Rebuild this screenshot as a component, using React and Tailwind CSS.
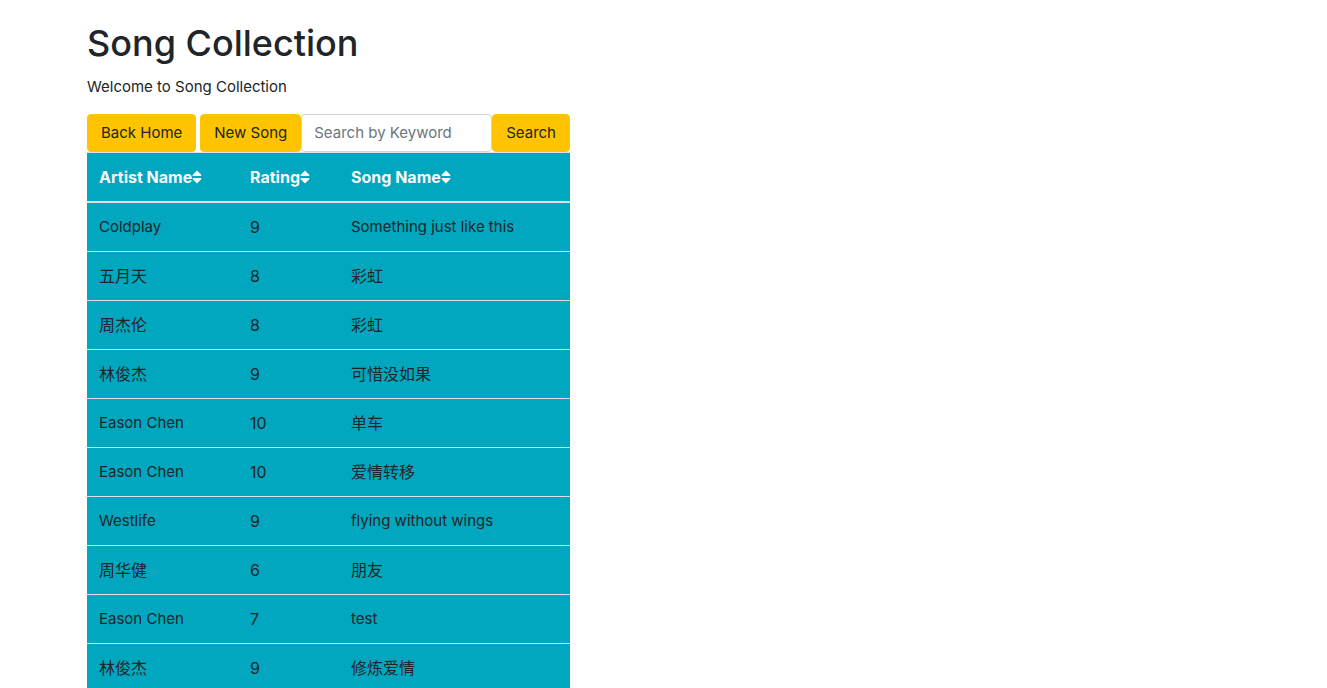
import { useState } from "react";
import { FaSort } from "react-icons/fa";

const songs = [
  ["Coldplay", 9, "Something just like this"],
  ["五月天", 8, "彩虹"],
  ["周杰伦", 8, "彩虹"],
  ["林俊杰", 9, "可惜没如果"],
  ["Eason Chen", 10, "单车"],
  ["Eason Chen", 10, "爱情转移"],
  ["Westlife", 9, "flying without wings"],
  ["周华健", 6, "朋友"],
  ["Eason Chen", 7, "test"],
  ["林俊杰", 9, "修炼爱情"],
];

const columns = [
  { label: "Artist Name", width: "w-[151px]" },
  { label: "Rating", width: "w-[101px]" },
  { label: "Song Name", width: "w-[231px]" },
];

// Latin letters are set slightly smaller than digits and Chinese characters.
const textSize = (value) => (/[a-z]/i.test(value) ? "text-[15px]" : "text-[16px]");

function Button({ children, type = "button" }) {
  return (
    <button
      type={type}
      className="shrink-0 cursor-pointer rounded border border-[#ffc300] bg-[#ffc300] px-[13px] py-1.5 whitespace-nowrap"
    >
      {children}
    </button>
  );
}

export default function App() {
  const [keyword, setKeyword] = useState("");

  return (
    <main className="mx-auto max-w-[1153px] pt-5 font-['Inter','Noto_Sans_CJK_SC',sans-serif] text-[15px] leading-6 text-[#212529]">
      <h1 className="mb-2 text-[36px] leading-[47px] font-medium">Song Collection</h1>
      <p className="mb-[15px]">Welcome to Song Collection</p>

      <div className="w-[483px] max-w-full">
        <form className="flex" onSubmit={(e) => e.preventDefault()}>
          <div className="flex shrink-0 gap-1">
            <Button>Back Home</Button>
            <Button>New Song</Button>
          </div>
          <input
            type="text"
            aria-label="Search by Keyword"
            placeholder="Search by Keyword"
            value={keyword}
            onChange={(e) => setKeyword(e.target.value)}
            className="min-w-0 flex-1 rounded border border-[#ced4da] bg-white px-3 py-1.5 placeholder:text-[#6c757d]"
          />
          <Button type="submit">Search</Button>
        </form>

        <table className="w-full table-fixed border-separate border-spacing-0 border-t border-[#dee2e6] text-left">
          <thead>
            <tr className="bg-[#00a7be] text-[16px] leading-6 text-[#f8f9fa]">
              {columns.map(({ label, width }) => (
                <th key={label} scope="col" className={`border-b-2 border-[#dee2e6] p-3 font-bold ${width}`}>
                  <button type="button" className="flex cursor-pointer items-center whitespace-nowrap">
                    {label}
                    <FaSort className="-mx-[3px] size-4" aria-hidden="true" />
                  </button>
                </th>
              ))}
            </tr>
          </thead>
          <tbody>
            {songs.map((song, i) => (
              <tr key={i} className="bg-[#00a7be]">
                {song.map((value, j) => (
                  <td key={j} className={`border-b border-[#dee2e6] p-3 leading-6 ${textSize(value)}`}>
                    {value}
                  </td>
                ))}
              </tr>
            ))}
          </tbody>
        </table>
      </div>
    </main>
  );
}
